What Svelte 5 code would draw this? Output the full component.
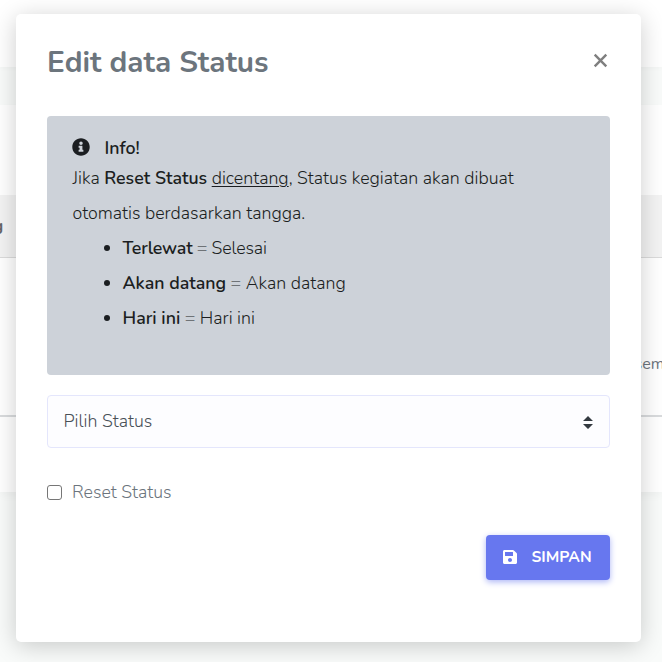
<script>
  const rules = [
    { name: 'Terlewat', result: 'Selesai', tight: true },
    { name: 'Akan datang', result: 'Akan datang' },
    { name: 'Hari ini', result: 'Hari ini' }
  ];
  let reset = $state(false);
</script>

<div class="page">
  <div class="topbar"></div>
  <div class="card">
    <div class="thead"><span class="cut-left">g</span></div>
    <div class="trow"><span class="cut-right">sem</span></div>
  </div>

  <div class="modal" role="dialog" aria-label="Edit data Status">
    <header>
      <h1>Edit data Status</h1>
      <button class="close" aria-label="Tutup">
        <svg width="15" height="15" viewBox="0 0 15 15"><path d="M1.700 1.700 13.300 13.300M13.300 1.700 1.700 13.300" stroke="#7f7f7f" stroke-width="2.400" fill="none" /></svg>
      </button>
    </header>

    <section class="alert">
      <div class="info">
        <svg width="18" height="18" viewBox="0 0 512 512"><path fill="#1b1e21" d="M256 8C119 8 8 119 8 256s111 248 248 248 248-111 248-248S393 8 256 8zm0 90a50 50 0 1 1 0 100 50 50 0 0 1 0-100zm68 284c0 6.600-5.400 12-12 12h-112c-6.600 0-12-5.400-12-12v-34c0-6.600 5.400-12 12-12h16v-56h-16c-6.600 0-12-5.400-12-12v-34c0-6.600 5.400-12 12-12h84c6.600 0 12 5.400 12 12v102h16c6.600 0 12 5.400 12 12v34z" /></svg>
        <b>Info!</b>
      </div>
      <p>Jika <b>Reset Status</b> <u>dicentang</u>, Status kegiatan akan dibuat<br />otomatis berdasarkan tangga.</p>
      <ul>
        {#each rules as rule}
          <li class:tight={rule.tight}><b>{rule.name}</b> <i>=</i> {rule.result}</li>
        {/each}
      </ul>
    </section>

    <div class="select">
      <span>Pilih Status</span>
      <svg width="10" height="13" viewBox="0 0 10 13"><path fill="#343a40" d="M5 0 10 5H0zM5 13 0 8h10z" /></svg>
    </div>

    <label class="check">
      <input type="checkbox" bind:checked={reset} />
      <span>Reset Status</span>
    </label>

    <div class="actions">
      <button class="save">
        <svg width="14" height="16" viewBox="0 0 448 512"><path fill="#fff" d="M433.900 129.900l-83.900-83.900A48 48 0 0 0 316.100 32H48C21.500 32 0 53.500 0 80v352c0 26.500 21.500 48 48 48h352c26.500 0 48-21.500 48-48V163.900a48 48 0 0 0-14.100-34zM224 416c-35.300 0-64-28.700-64-64s28.700-64 64-64 64 28.700 64 64-28.700 64-64 64zm96-304.500V212c0 6.600-5.400 12-12 12H76c-6.600 0-12-5.400-12-12V108c0-6.600 5.400-12 12-12h228.500c3.200 0 6.200 1.300 8.500 3.500l3.500 3.500a12 12 0 0 1 3.500 8.500z" /></svg>
        <span>SIMPAN</span>
      </button>
    </div>
  </div>
</div>

<style>
  :global(body) { margin: 0; }
  * { box-sizing: border-box; }
  .page {
    position: relative;
    width: 662px;
    height: 662px;
    overflow: hidden;
    background: #f9fbfa;
    font-family: Nunito, Lato, sans-serif;
    font-size: 17.800px;
  }
  .topbar { height: 67px; background: #fff; box-shadow: 0 1px 5px rgba(0, 0, 0, 0.03); }
  .card {
    height: 387px;
    margin-top: 38px;
    padding-top: 90px;
    background: #fff;
    box-shadow: 0 4px 8px rgba(0, 0, 0, 0.03);
  }
  .thead { height: 63px; background: #f3f3f3; border-bottom: 1px solid #dbdbdb; padding-top: 20px; line-height: 22px; }
  .cut-left { display: block; width: 20px; margin-left: -6.500px; font-size: 16px; font-weight: 700; color: #666; }
  .trow { height: 159px; border-bottom: 2px solid #d9dbdd; padding-top: 95px; line-height: 22px; }
  .cut-right { display: block; margin-left: 634.500px; font-size: 16px; color: #6c757d; white-space: nowrap; }

  .modal {
    position: absolute;
    left: 16px;
    top: 14px;
    width: 625px;
    height: 628px;
    padding: 0 31px;
    border-radius: 5px;
    background: #fff;
    box-shadow: 0 4px 25px rgba(0, 0, 0, 0.2);
    display: flex;
    flex-direction: column;
    font-weight: 300;
  }
  header { height: 102px; padding: 28px 2px 0 0; display: flex; justify-content: space-between; align-items: flex-start; }
  h1 { margin: 0; font-size: 29.700px; line-height: 40px; font-weight: 700; color: #6c757d; white-space: nowrap; }
  button { border: 0; padding: 0; font: inherit; }
  .close { display: flex; margin-top: 11px; background: none; }

  .alert { height: 259px; padding: 17px 25px 0 25.500px; border-radius: 4px; background: #cdd2d9; color: #1b1e21; }
  .info { height: 28px; display: flex; align-items: center; gap: 14.500px; padding-top: 1px; margin-left: -0.500px; }
  .info svg { margin-top: -1px; }
  b { font-weight: 600; }
  p { margin: 0; line-height: 35px; white-space: nowrap; }
  u { text-underline-offset: 2px; text-decoration-thickness: 1px; }
  ul { margin: 0; padding-left: 50px; line-height: 35px; }
  .tight { letter-spacing: -0.170px; }
  i { font-style: normal; color: #6f7377; }

  .select {
    height: 53px;
    margin-top: 20px;
    padding: 0 16px 0 15.500px;
    border: 1px solid #e4e6fc;
    border-radius: 4px;
    background: #fdfdff;
    color: #495057;
    display: flex;
    align-items: center;
    justify-content: space-between;
  }
  .select span { margin-top: -2px; }
  .select svg { margin-top: 1px; }
  .check { height: 30px; margin-top: 29px; display: flex; align-items: center; gap: 10px; color: #6c757d; }
  input { appearance: none; width: 15px; height: 15px; margin: 0; border: 1px solid #767676; border-radius: 3px; background: #fff; }
  .actions { margin-top: 28px; display: flex; justify-content: flex-end; }
  .save {
    width: 124px;
    height: 45px;
    border-radius: 4px;
    background: #6777ef;
    color: #fff;
    font-size: 15.600px;
    font-weight: 700;
    box-shadow: 0 2px 6px #acb5f6;
    display: flex;
    align-items: center;
    padding: 0 17px 2px;
    gap: 14.500px;
  }
</style>
